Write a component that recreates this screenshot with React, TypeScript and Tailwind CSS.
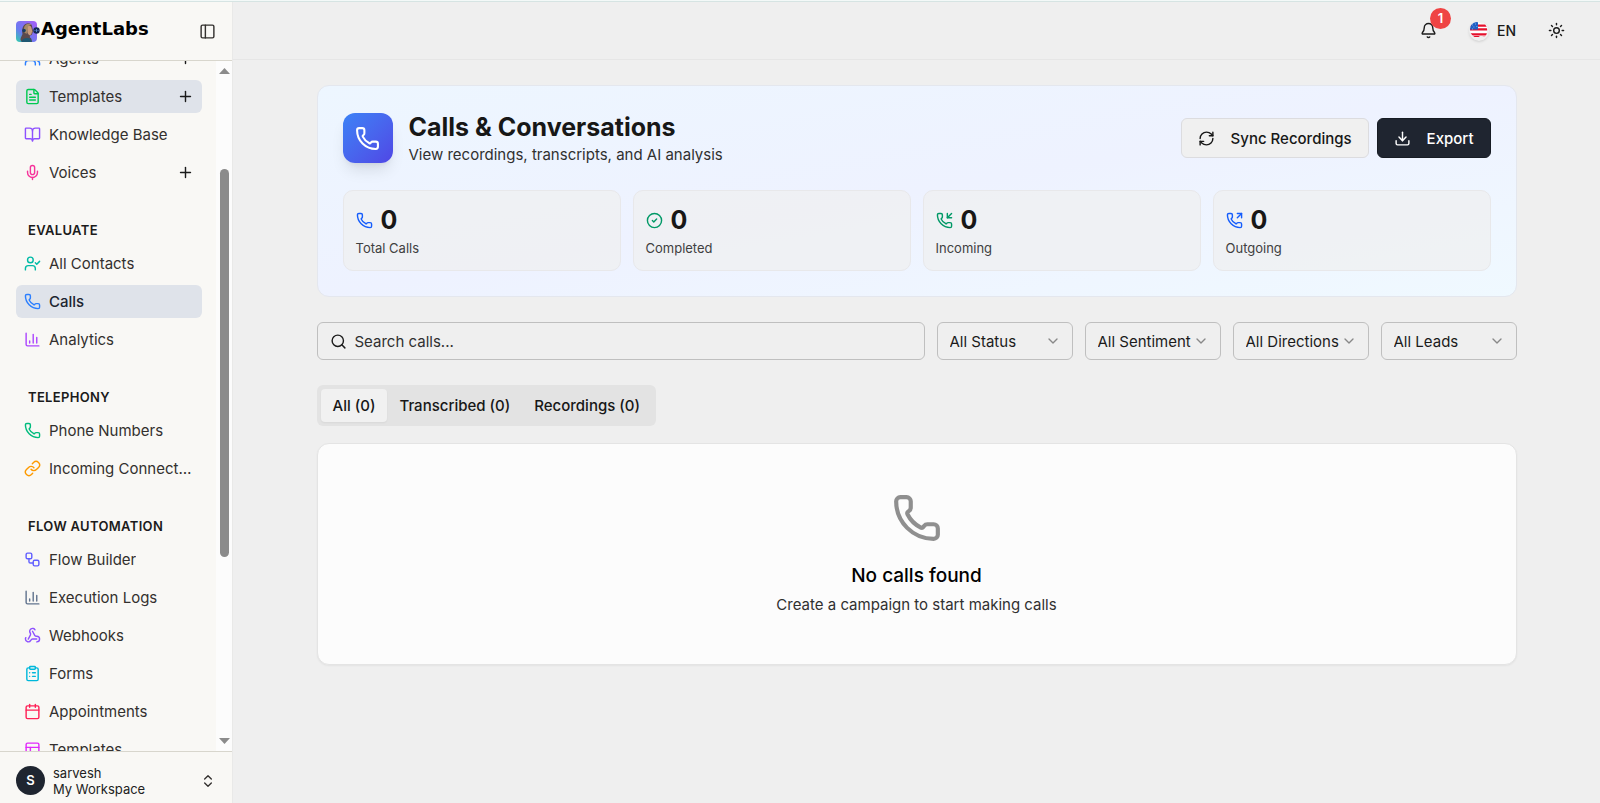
import { ReactNode } from "react";
import {
	Bell,
	BookOpen,
	Calendar,
	ChartColumn,
	ChevronDown,
	ChevronsUpDown,
	CircleCheck,
	ClipboardList,
	Download,
	FileText,
	Link,
	LucideIcon,
	Mic,
	PanelLeft,
	PanelsTopLeft,
	Phone,
	PhoneIncoming,
	PhoneOutgoing,
	Plus,
	RefreshCw,
	Search,
	Sun,
	UserCheck,
	Users,
	Webhook,
	Workflow,
} from "lucide-react";

type NavItem = {
	label: string;
	icon: LucideIcon;
	color: string;
	highlighted?: boolean;
	current?: boolean;
	canAdd?: boolean;
};

type NavGroup = {
	heading?: string;
	items: NavItem[];
};

const navGroups: NavGroup[] = [
	{
		items: [
			{ label: "Agents", icon: Users, color: "text-blue-500", canAdd: true },
			{ label: "Templates", icon: FileText, color: "text-green-500", highlighted: true, canAdd: true },
			{ label: "Knowledge Base", icon: BookOpen, color: "text-violet-500" },
			{ label: "Voices", icon: Mic, color: "text-pink-500", canAdd: true },
		],
	},
	{
		heading: "EVALUATE",
		items: [
			{ label: "All Contacts", icon: UserCheck, color: "text-teal-500" },
			{ label: "Calls", icon: Phone, color: "text-blue-500", highlighted: true, current: true },
			{ label: "Analytics", icon: ChartColumn, color: "text-purple-500" },
		],
	},
	{
		heading: "TELEPHONY",
		items: [
			{ label: "Phone Numbers", icon: Phone, color: "text-emerald-500" },
			{ label: "Incoming Connections", icon: Link, color: "text-amber-500" },
		],
	},
	{
		heading: "FLOW AUTOMATION",
		items: [
			{ label: "Flow Builder", icon: Workflow, color: "text-indigo-500" },
			{ label: "Execution Logs", icon: ChartColumn, color: "text-slate-500" },
			{ label: "Webhooks", icon: Webhook, color: "text-violet-500" },
			{ label: "Forms", icon: ClipboardList, color: "text-cyan-500" },
			{ label: "Appointments", icon: Calendar, color: "text-rose-500" },
			{ label: "Templates", icon: PanelsTopLeft, color: "text-fuchsia-500" },
		],
	},
];

const stats = [
	{ label: "Total Calls", value: 0, icon: Phone, color: "text-blue-600" },
	{ label: "Completed", value: 0, icon: CircleCheck, color: "text-emerald-600" },
	{ label: "Incoming", value: 0, icon: PhoneIncoming, color: "text-emerald-600" },
	{ label: "Outgoing", value: 0, icon: PhoneOutgoing, color: "text-blue-600" },
];

const filters = [
	{ label: "Status", value: "All Status" },
	{ label: "Sentiment", value: "All Sentiment" },
	{ label: "Direction", value: "All Directions" },
	{ label: "Lead", value: "All Leads" },
];

const tabs = ["All (0)", "Transcribed (0)", "Recordings (0)"];

const LogoMark = () => (
	<svg width="24" height="21" viewBox="0 0 24 21" aria-hidden="true">
		<defs>
			<linearGradient id="logo-bg" x1="0" y1="1" x2="1" y2="0">
				<stop offset="0" stopColor="#2dd4a8" />
				<stop offset="0.35" stopColor="#6a7cf0" />
				<stop offset="1" stopColor="#a85cf5" />
			</linearGradient>
		</defs>
		<rect width="21" height="21" rx="4" fill="url(#logo-bg)" />
		<path d="M4.500 19c0-3 1.500-4 2-6-1-4 0-8 3-10 3-1.500 6-.5 6.500 2l.8 4 .6 2-1 .5c0 2-.8 3-2.500 3v2c1.500.5 2 2 2 4.500H6z" fill="#5b4a4c" />
		<path d="M11 5c2-1.200 4.300-.5 4.500 2l1 4-.8.500c0 2-.7 2.700-2.500 2.700L11.500 12z" fill="#c99a7a" />
		<path d="M8 7c.5-3.500 4-5.500 7.500-3.500-3 .5-4 2.500-4 5L10.500 13 8 11z" fill="#a58a66" />
		<path d="M5.500 21c.5-3 2.500-4 5.500-4s4.500 1.500 4.500 4z" fill="#1f5872" />
		<circle cx="8" cy="9.500" r="1.800" fill="#173d63" />
		<circle cx="20.500" cy="9.500" r="3.200" fill="#152a55" />
		<path d="M19 10v-1M20.500 11V8M22 10v-1" stroke="#6ea8ff" strokeWidth=".7" />
	</svg>
);

const FlagIcon = () => (
	<svg width="20" height="20" viewBox="0 0 20 20" aria-hidden="true">
		<defs>
			<clipPath id="flag-clip">
				<path d="M1 9q0-5 3.500-7Q8 .3 9.500 1.500c2 1.500 5 1 6.500 1.500q2 2.500 2.200 6 0 4-1.700 6c-2 .8-4-.2-6 .2-.8 1.300-3 1.300-5 .8Q1 13 1 9z" />
			</clipPath>
		</defs>
		<g clipPath="url(#flag-clip)">
			<rect width="20" height="20" fill="#fff" />
			<path d="M0 4.600h20M0 8.300h20M0 13.400h20" stroke="#e5102c" strokeWidth="2.200" />
			<path d="M4 16h14v-1H4z" fill="#e5102c" />
			<rect width="9" height="8.500" fill="#1f5fc4" />
			<path d="M3 4h.8M6 3h.8M4.500 6h.8M7.500 5.500h.8M3 8h.8" stroke="#a9c8f5" strokeWidth=".9" />
		</g>
	</svg>
);

const NavRow = ({ label, icon: Icon, color, highlighted, current, canAdd }: NavItem) => (
	<li
		className={`flex h-[33px] items-center rounded-md pr-2 pl-2 ${highlighted ? "bg-[#dfe3ea]" : ""}`}
	>
		<a
			href="#"
			aria-current={current ? "page" : undefined}
			className={`flex min-w-0 flex-1 items-center gap-2 ${current ? "font-medium text-[#1c2430]" : ""}`}
		>
			<Icon className={`size-[17px] shrink-0 ${color}`} />
			<span className="truncate">{label}</span>
		</a>
		{canAdd && (
			<button type="button" aria-label={`Add to ${label}`} className="text-[#1b1b1b]">
				<Plus className="size-[17px]" />
			</button>
		)}
	</li>
);

const Sidebar = () => (
	<aside className="flex w-[233px] shrink-0 flex-col border-r border-[#e9e9e8] bg-[#f9f8f5] text-[#33302e]">
		<div className="flex h-[59px] shrink-0 items-center justify-between border-b border-[#d8d6cd] px-4">
			<a href="#" className="flex items-center gap-px">
				<LogoMark />
				<span className="pb-1 font-['DejaVu_Sans',sans-serif] text-lg leading-5 font-bold text-black">AgentLabs</span>
			</a>
			<button type="button" aria-label="Toggle sidebar">
				<PanelLeft className="size-[17px]" />
			</button>
		</div>

		<div className="flex min-h-0 flex-1">
			<nav className="min-w-0 flex-1 overflow-hidden pr-[14px] pl-4">
				<div className="-mt-[19px] flex flex-col gap-6">
					{navGroups.map((group, index) => (
						<section key={index}>
							{group.heading && (
								<h2 className="flex h-[34px] items-center px-3 text-[13px] font-semibold tracking-wide text-[#1b1b1b]">
									{group.heading}
								</h2>
							)}
							<ul className="flex flex-col gap-[5px]">
								{group.items.map((item) => (
									<NavRow key={item.label} {...item} />
								))}
							</ul>
						</section>
					))}
				</div>
			</nav>
			<div aria-hidden="true" className="flex w-4 flex-col items-center bg-[#fcfcfc] py-[7px] text-[#8b8b8b]">
				<svg width="11" height="6" viewBox="0 0 11 6" fill="currentColor">
					<path d="M5.500 0 11 6H0z" />
				</svg>
				<div className="flex w-[9px] flex-1 flex-col pt-[95px] pb-[181px]">
					<div className="flex-1 rounded-full bg-[#8b8b8b]" />
				</div>
				<svg width="11" height="6" viewBox="0 0 11 6" fill="currentColor">
					<path d="M5.500 6 0 0h11z" />
				</svg>
			</div>
		</div>

		<button
			type="button"
			className="flex h-[52px] shrink-0 items-center gap-2 border-t border-[#d8d6cd] px-4 pt-1.5 text-left"
		>
			<span className="flex size-[29px] items-center justify-center rounded-full bg-[#1f2530] text-[13px] font-semibold text-white">
				S
			</span>
			<span className="flex flex-1 flex-col text-[13px] leading-4 text-[#222]">
				<span>sarvesh</span>
				<span>My Workspace</span>
			</span>
			<ChevronsUpDown className="size-4" />
		</button>
	</aside>
);

const TopBar = () => (
	<header className="flex h-[58px] shrink-0 items-center justify-end border-b border-[#e6e6e6] pr-[35px] text-[#1b1b1b]">
		<button type="button" aria-label="Notifications" className="relative mr-8">
			<Bell className="size-[17px]" />
			<span className="absolute -top-[14px] left-[10px] flex size-[21px] items-center justify-center rounded-full bg-[#ef4444] text-[13px] font-semibold text-white">
				1
			</span>
		</button>
		<button type="button" className="mr-8 flex items-center gap-2 text-sm font-medium">
			<span className="rounded-full shadow-sm">
				<FlagIcon />
			</span>
			EN
		</button>
		<button type="button" aria-label="Switch theme">
			<Sun className="size-[17px]" />
		</button>
	</header>
);

type StatCardProps = {
	label: string;
	value: number;
	icon: ReactNode;
};

const StatCard = ({ label, value, icon }: StatCardProps) => (
	<div className="rounded-[10px] border border-[#e8e8ea] bg-[#f0f0f0]/70 px-3 py-[13px]">
		<div className="flex items-center gap-2">
			{icon}
			<p className="text-[25px] leading-8 font-bold text-[#171717]">{value}</p>
		</div>
		<p className="mt-1 text-[13px] leading-[17px] text-[#404040]">{label}</p>
	</div>
);

const Hero = () => (
	<section className="rounded-xl border border-[#e4e7ee] bg-linear-to-br from-[#edf6ff] via-indigo-50 to-sky-50 p-[25px]">
		<div className="mb-[25px] flex items-center justify-between">
			<div className="flex items-center gap-4">
				<div className="flex size-[50px] items-center justify-center rounded-xl bg-linear-to-br from-[#3b82f6] to-[#4f46e5] text-white shadow-lg">
					<Phone className="size-[25px]" />
				</div>
				<div>
					<h1 className="text-[25px] leading-[33px] font-bold text-[#171717]">Calls &amp; Conversations</h1>
					<p className="text-[15px] leading-[21px] text-[#303030]">View recordings, transcripts, and AI analysis</p>
				</div>
			</div>
			<div className="flex gap-2 text-[15px] font-medium">
				<button
					type="button"
					className="flex h-10 items-center gap-4 rounded-md border border-[#dcdcdf] bg-[#f0f0f0] px-4 text-[#171717]"
				>
					<RefreshCw className="size-[17px]" />
					Sync Recordings
				</button>
				<button
					type="button"
					className="flex h-10 items-center gap-4 rounded-md border border-[#171c24] bg-[#1f2530] px-4 text-white"
				>
					<Download className="size-[17px]" />
					Export
				</button>
			</div>
		</div>
		<div className="grid grid-cols-4 gap-3">
			{stats.map(({ label, value, icon: Icon, color }) => (
				<StatCard key={label} label={label} value={value} icon={<Icon className={`size-[17px] ${color}`} />} />
			))}
		</div>
	</section>
);

const FilterBar = () => (
	<div className="flex gap-3 text-[15px] text-[#1b1b1b]">
		<label className="flex h-[38px] flex-1 items-center gap-2 rounded-md border border-[#bfbfbf] px-3">
			<Search className="size-[17px]" />
			<span className="sr-only">Search calls</span>
			<input
				type="search"
				placeholder="Search calls..."
				className="min-w-0 flex-1 bg-transparent outline-none placeholder:text-[#303030]"
			/>
		</label>
		{filters.map((filter) => (
			<label key={filter.label} className="relative w-[136px]">
				<span className="sr-only">{filter.label}</span>
				<select className="h-[38px] w-full appearance-none rounded-md border border-[#bfbfbf] bg-transparent px-3">
					<option>{filter.value}</option>
				</select>
				<ChevronDown className="pointer-events-none absolute top-[11px] right-3 size-4 text-[#888]" />
			</label>
		))}
	</div>
);

const App = () => {
	return (
		<div className="flex h-screen flex-col bg-[#efefef] font-[Inter,sans-serif] text-[15px] leading-[21px]">
			<div className="h-0.5 shrink-0 border-b border-[#d6e4e3] bg-[#f3f9f8]" />
			<div className="flex min-h-0 flex-1">
				<Sidebar />
				<div className="flex min-w-0 flex-1 flex-col">
					<TopBar />
					<main className="min-h-0 flex-1 overflow-hidden px-6 pt-[25px]">
						<div className="mx-auto flex max-w-[1200px] flex-col">
							<Hero />
							<div className="mt-[25px]">
								<FilterBar />
							</div>
							<div role="tablist" className="mt-[25px] flex h-[41px] self-start rounded-md bg-[#e3e3e3] p-1">
								{tabs.map((tab, index) => (
									<button
										key={tab}
										type="button"
										role="tab"
										aria-selected={index === 0}
										className={`rounded-[4px] px-3 font-medium text-[#171717] ${index === 0 ? "bg-[#f1f1f1] shadow-xs" : ""}`}
									>
										{tab}
									</button>
								))}
							</div>
							<section className="mt-[17px] flex flex-col items-center rounded-xl border border-[#e4e4e4] bg-[#fcfcfc] py-[49px] shadow-xs">
								<Phone className="size-[50px] text-[#8f8f8f]" />
								<h2 className="mt-[18px] text-[19px] leading-[29px] font-medium text-black">No calls found</h2>
								<p className="mt-1 text-[#303030]">Create a campaign to start making calls</p>
							</section>
						</div>
					</main>
				</div>
			</div>
		</div>
	);
};

export default App;
